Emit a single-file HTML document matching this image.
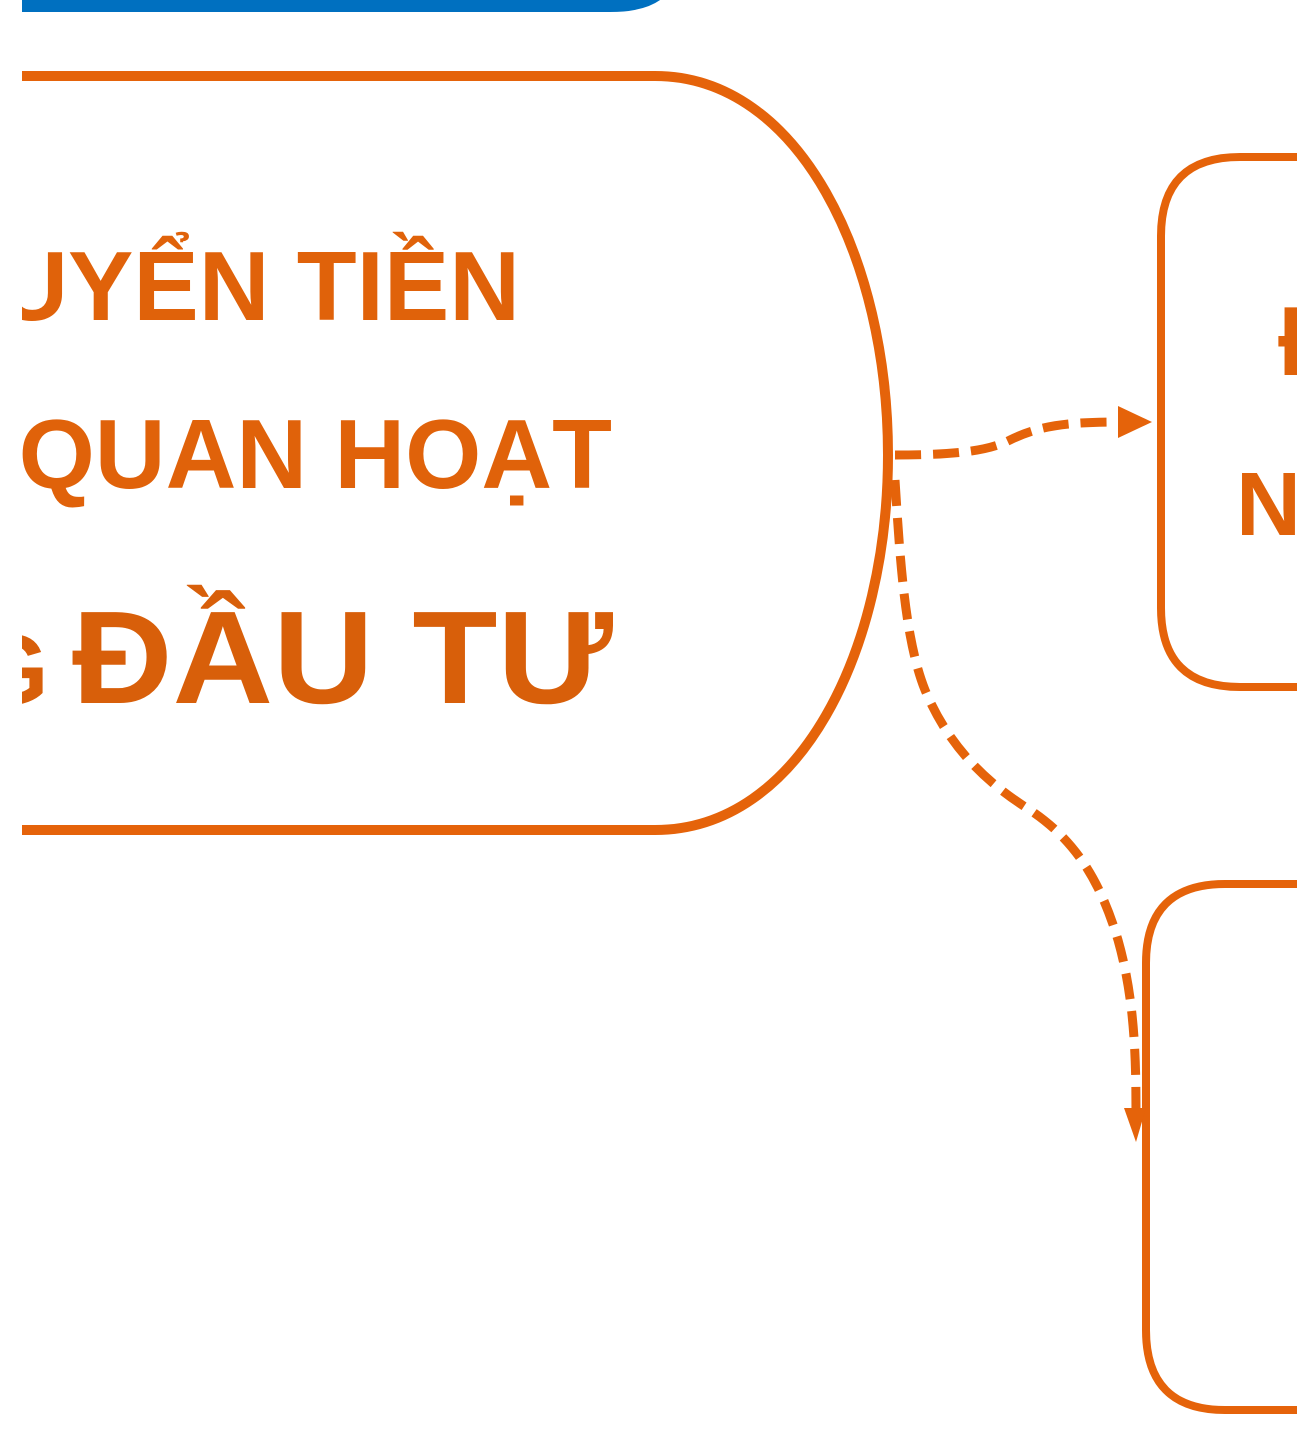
<!DOCTYPE html>
<html><head><meta charset="utf-8"><style>
html,body{margin:0;padding:0;background:#fff;}
svg{display:block}
text{font-family:"Liberation Sans",Arial,sans-serif;font-weight:bold;fill:#e0620a}
</style></head><body>
<svg width="1309" height="1455" viewBox="0 0 1309 1455" xmlns="http://www.w3.org/2000/svg">
<defs>
<clipPath id="c1"><rect x="22" y="0" width="1275" height="1455"/></clipPath>
<clipPath id="c2"><rect x="0" y="0" width="1297" height="1455"/></clipPath>
</defs>
<path d="M22 -10 H600 Q650 -10 670 -10 Q655 12 610 12 H22 Z" fill="#0070c0"/>
<path d="M22 76 H655 C800 76 888 260 888 455 C888 650 800 830 655 830 H22" fill="none" stroke="#e5630a" stroke-width="10"/>
<g clip-path="url(#c1)">
<text x="520" y="320" font-size="98" text-anchor="end">UYỂN TIỀN</text>
<text x="612" y="488" font-size="98" text-anchor="end">QUAN HOẠT</text>
<text x="-29" y="704" font-size="100" style="fill:#d85f0a">G</text>
<text x="72" y="703" font-size="132" textLength="541" lengthAdjust="spacingAndGlyphs" style="fill:#d85f0a">ĐẦU TƯ</text>
</g>
<g clip-path="url(#c2)">
<path d="M1400 157 H1240 Q1161 157 1161 236 V608 Q1161 687 1240 687 H1400" fill="none" stroke="#e5630a" stroke-width="8"/>
<path d="M1400 884 H1225 Q1146 884 1146 963 V1330 Q1146 1410 1225 1410 H1400" fill="none" stroke="#e5630a" stroke-width="8"/>
<text x="1278" y="375" font-size="98">Đ</text>
<text x="1236" y="535" font-size="90">N</text>
</g>
<path d="M895 455 C960 455 990 450 1010 440 C1040 425 1070 422 1120 422" fill="none" stroke="#e5630a" stroke-width="9" stroke-dasharray="26 12"/>
<path d="M1118 406 L1152 422 L1118 438 Z" fill="#e5630a"/>
<path d="M895 480 C900 560 905 640 925 690 C950 750 990 785 1030 810 C1075 840 1100 880 1118 940 C1135 1000 1136 1060 1136 1115" fill="none" stroke="#e5630a" stroke-width="9" stroke-dasharray="26 12"/>
<path d="M1124 1108 L1136 1142 L1146 1108 Z" fill="#e5630a"/>
</svg>
</body></html>
